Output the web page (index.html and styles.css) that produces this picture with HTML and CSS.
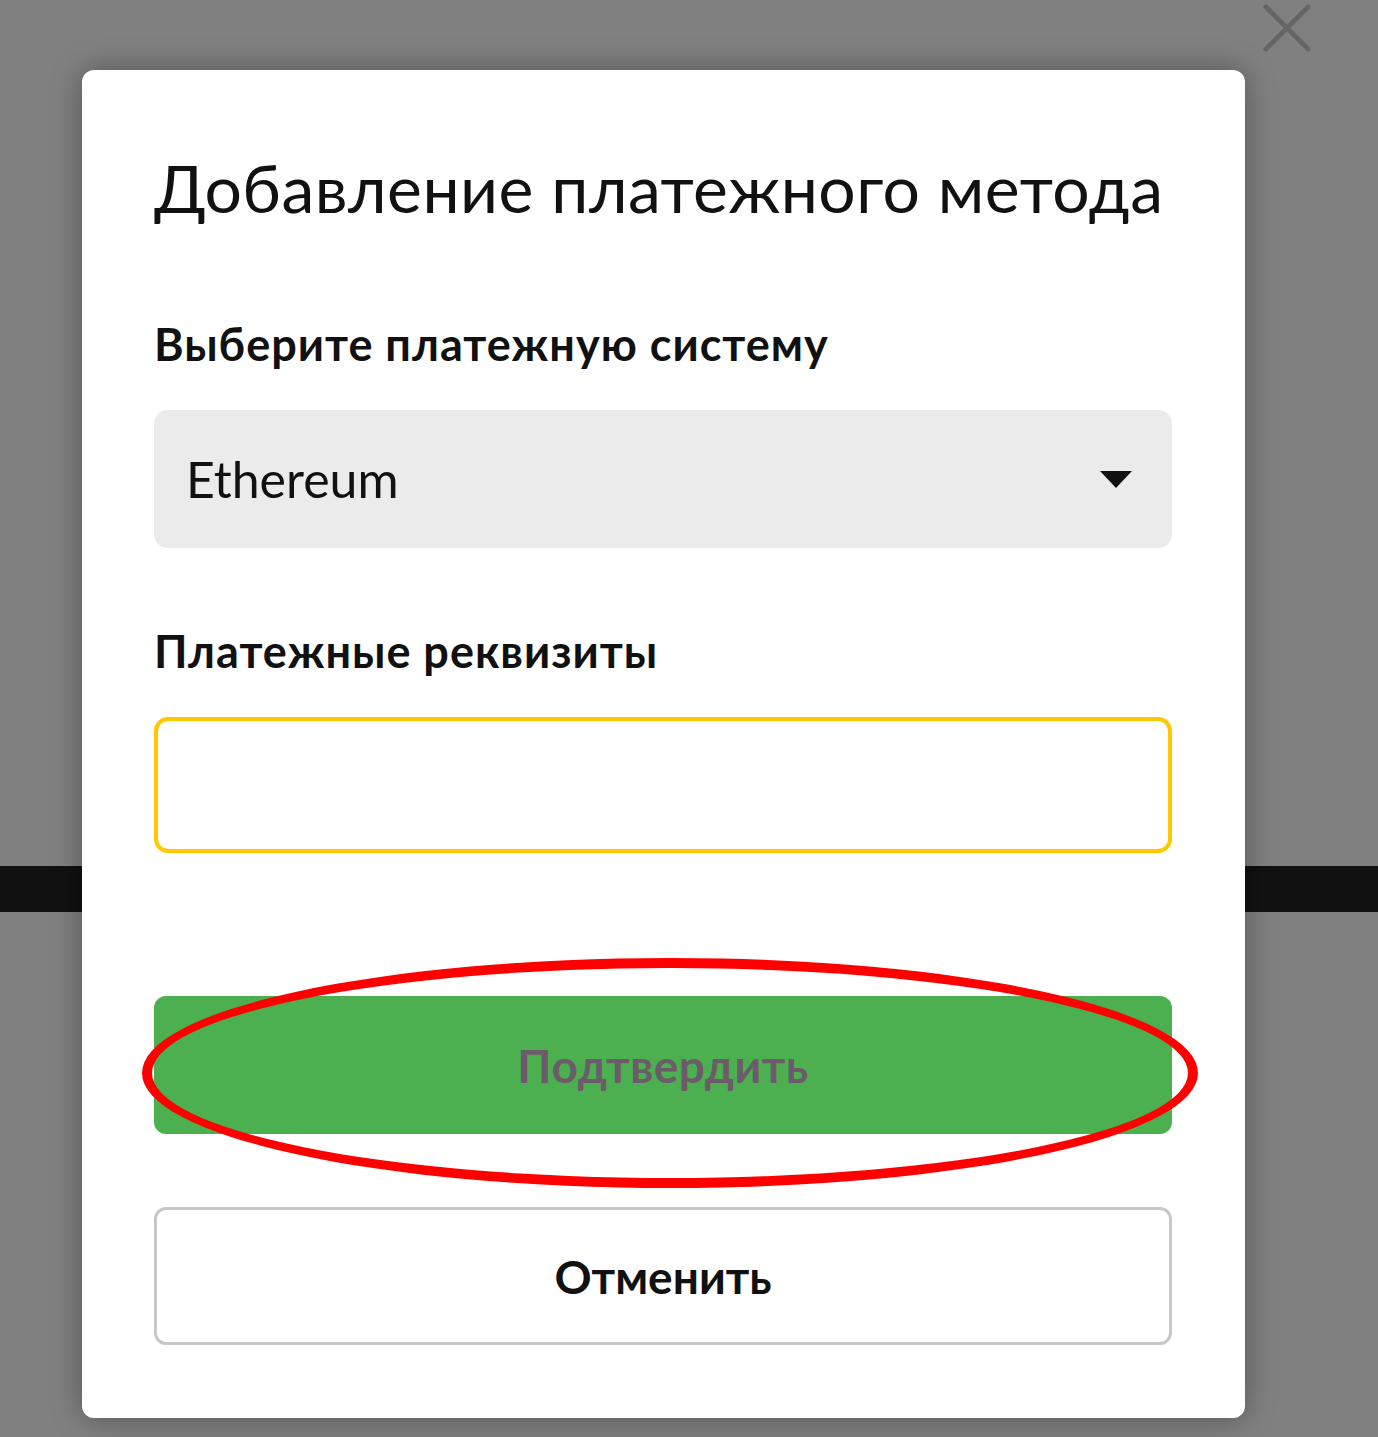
FILE: index.html
```html
<!DOCTYPE html>
<html lang="ru">
<head>
    <meta charset="UTF-8">
    <meta name="viewport" content="width=device-width, initial-scale=1.0">
    <title>Добавление платежного метода</title>
    <link rel="stylesheet" href="styles.css">
</head>
<body>

    <!-- страница под затемнением -->
    <div class="page">
        <div class="page-bar"></div>
    </div>

    <button class="close-btn" aria-label="Закрыть">
        <svg width="50" height="50" viewBox="0 0 50 50">
            <path d="M4 4 L46 46 M46 4 L4 46" stroke="#666" stroke-width="5" stroke-linecap="round"/>
        </svg>
    </button>

    <div class="modal">
        <h1 class="modal-title">Добавление платежного метода</h1>

        <label class="field-label">Выберите платежную систему</label>
        <div class="select">
            <span>Ethereum</span>
            <span class="select-arrow"></span>
        </div>

        <label class="field-label">Платежные реквизиты</label>
        <input class="text-input" type="text">

        <div class="actions">
            <button class="btn btn-confirm">Подтвердить</button>
            <button class="btn btn-cancel">Отменить</button>
            <!-- пометка на скриншоте -->
            <div class="highlight"></div>
        </div>
    </div>

</body>
</html>
```

FILE: styles.css
```css
/* --- Страница --- */
body {
    margin: 0;
    height: 1437px;
    overflow: hidden;
    background-color: #808080;
    font-family: 'Lato', 'Noto Sans', sans-serif;
    position: relative;
}

.page {
    padding-top: 866px;
}

.page-bar {
    height: 46px;
    background-color: #111;
}

.close-btn {
    position: absolute;
    top: 3px;
    left: 1262px;
    padding: 0;
    border: none;
    background: none;
    cursor: pointer;
}

/* --- Модальное окно --- */
.modal {
    position: absolute;
    left: 82px;
    top: 70px;
    width: 1163px;
    height: 1348px;
    box-sizing: border-box;
    padding: 78px 73px 0 72px;
    background-color: #fff;
    border-radius: 12px;
    box-shadow: 0 0 30px rgba(0, 0, 0, 0.35);
    display: flex;
    flex-direction: column;
}

.modal-title {
    margin: 0 0 88px;
    font-size: 66px;
    font-weight: 400;
    line-height: 80px;
    color: #111;
    letter-spacing: 0.5px;
}

.field-label {
    display: block;
    font-size: 45px;
    font-weight: 700;
    line-height: 56px;
    color: #111;
    letter-spacing: 1px;
    margin-bottom: 38px;
}

.select {
    height: 138px;
    box-sizing: border-box;
    padding: 0 40px 0 32px;
    background-color: #ebebeb;
    border-radius: 14px;
    display: flex;
    align-items: center;
    justify-content: space-between;
    font-size: 50px;
    color: #111;
    margin-bottom: 75px;
}

.select-arrow {
    width: 0;
    height: 0;
    border-left: 16px solid transparent;
    border-right: 16px solid transparent;
    border-top: 17px solid #111;
}

.text-input {
    height: 136px;
    box-sizing: border-box;
    border: 4px solid #ffc800;
    border-radius: 14px;
    background: #fff;
    outline: none;
}

/* --- Кнопки --- */
.actions {
    position: relative;
    margin-top: 143px;
    display: flex;
    flex-direction: column;
    gap: 73px;
}

.btn {
    height: 138px;
    box-sizing: border-box;
    border-radius: 12px;
    font-family: inherit;
    font-size: 46px;
    font-weight: 700;
    cursor: pointer;
}

.btn-confirm {
    background-color: #4caf50;
    border: none;
    color: #6c5c6a;
    letter-spacing: 0.5px;
}

.btn-cancel {
    background-color: #fff;
    border: 3px solid #c8c8c8;
    color: #111;
}

.highlight {
    position: absolute;
    left: -12px;
    top: -38px;
    width: 1056px;
    height: 230px;
    box-sizing: border-box;
    border: 10px solid #ff0000;
    border-radius: 50%;
    pointer-events: none;
}
```
